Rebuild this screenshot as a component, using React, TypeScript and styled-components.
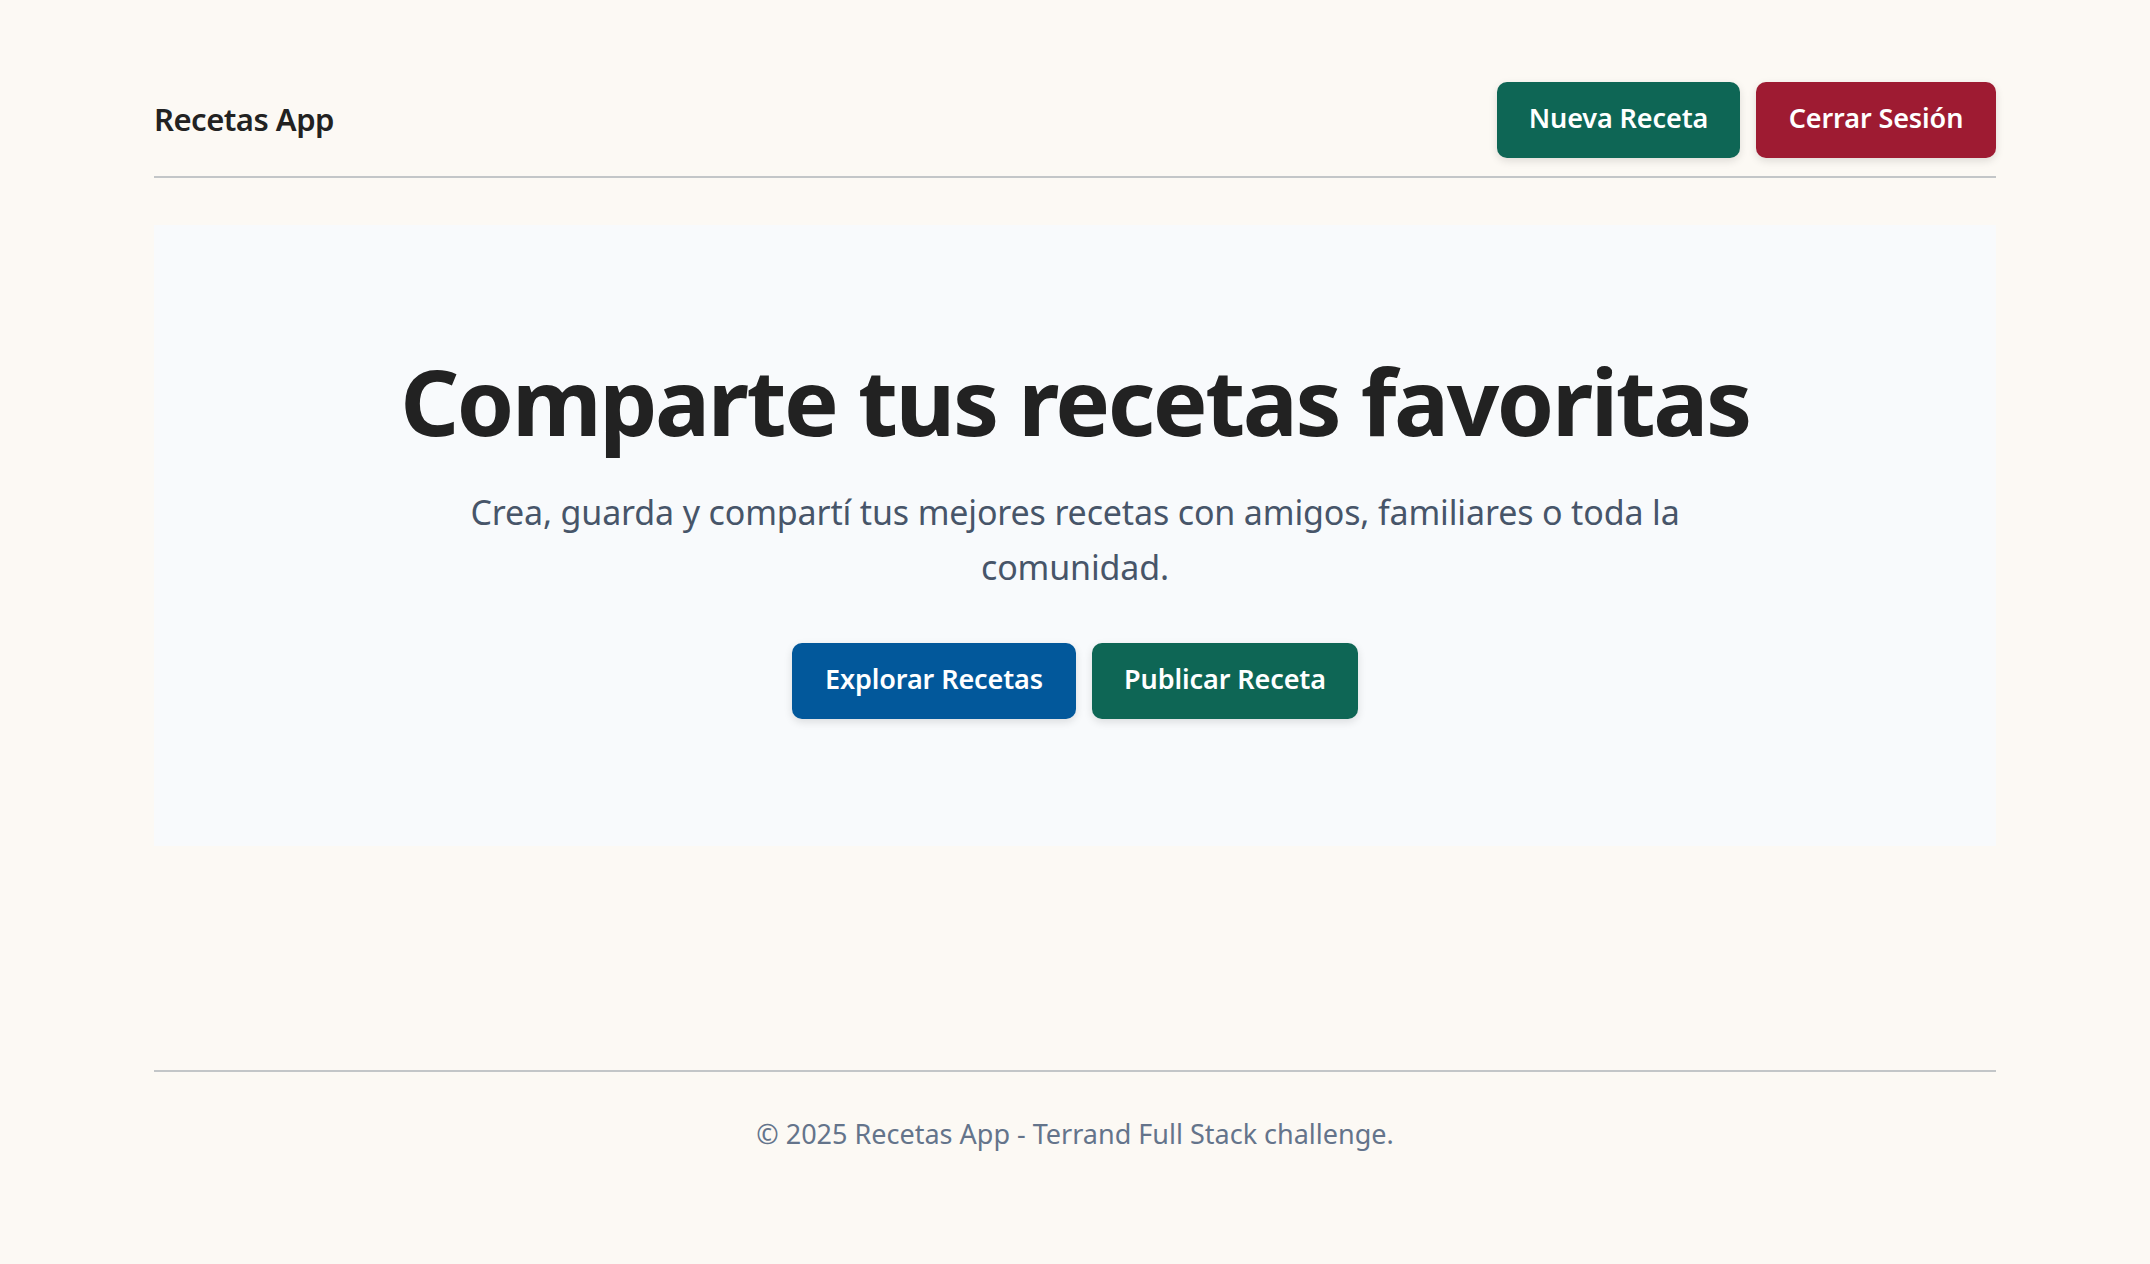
import React from "react";
import styled, { createGlobalStyle } from "styled-components";

const GlobalStyle = createGlobalStyle`
  * {
    box-sizing: border-box;
  }
  body {
    margin: 0;
    background: #fcf9f4;
    font-family: "Noto Sans", "Open Sans", sans-serif;
    color: #222222;
  }
`;

const Page = styled.div`
  max-width: 1842px;
  margin: 0 auto;
  display: flex;
  flex-direction: column;
`;

const Header = styled.header`
  display: flex;
  align-items: center;
  justify-content: space-between;
  padding: 82px 0 18px;
  border-bottom: 2px solid #c3c6c8;
`;

const Brand = styled.div`
  font-size: 31px;
  font-weight: 600;
  letter-spacing: -0.5px;
  color: #222222;
  padding-bottom: 3px;
`;

const Actions = styled.nav`
  display: flex;
  gap: 16px;
`;

const Button = styled.button<{ $bg: string; $w: number }>`
  width: ${(p) => p.$w}px;
  height: 76px;
  padding: 0 0 5px;
  border: 0;
  border-radius: 10px;
  background: ${(p) => p.$bg};
  color: #ffffff;
  font-family: inherit;
  font-size: 27px;
  font-weight: 600;
  letter-spacing: -0.1px;
  white-space: nowrap;
  box-shadow: 0 3px 8px rgba(0, 0, 0, 0.12);
  cursor: pointer;
`;

const Hero = styled.section`
  margin-top: 47px;
  background: #f8fafc;
  padding: 122px 40px 127px;
  display: flex;
  flex-direction: column;
  align-items: center;
  text-align: center;
`;

const Title = styled.h1`
  margin: 0;
  font-size: 92px;
  line-height: 108px;
  font-weight: 700;
  letter-spacing: -2.4px;
  color: #222222;
`;

const Subtitle = styled.p`
  margin: 30px 0 0;
  max-width: 1240px;
  font-size: 34px;
  line-height: 55px;
  letter-spacing: -0.15px;
  color: #475569;
`;

const HeroActions = styled.div`
  display: flex;
  gap: 16px;
  margin-top: 48px;
`;

const Footer = styled.footer`
  margin-top: 224px;
  border-top: 2px solid #c3c6c8;
  padding: 42px 0 60px;
  text-align: center;
  font-size: 27px;
  line-height: 39px;
  color: #64748b;
`;

export default function App() {
  return (
    <>
      <GlobalStyle />
      <Page>
        <Header>
          <Brand>Recetas App</Brand>
          <Actions>
            <Button $bg="#0e6655" $w={243}>
              Nueva Receta
            </Button>
            <Button $bg="#9e1b32" $w={240}>
              Cerrar Sesión
            </Button>
          </Actions>
        </Header>
        <Hero>
          <Title>Comparte tus recetas favoritas</Title>
          <Subtitle>
            Crea, guarda y compartí tus mejores recetas con amigos, familiares o
            toda la comunidad.
          </Subtitle>
          <HeroActions>
            <Button $bg="#02589b" $w={284}>
              Explorar Recetas
            </Button>
            <Button $bg="#0e6655" $w={266}>
              Publicar Receta
            </Button>
          </HeroActions>
        </Hero>
        <Footer>© 2025 Recetas App - Terrand Full Stack challenge.</Footer>
      </Page>
    </>
  );
}
